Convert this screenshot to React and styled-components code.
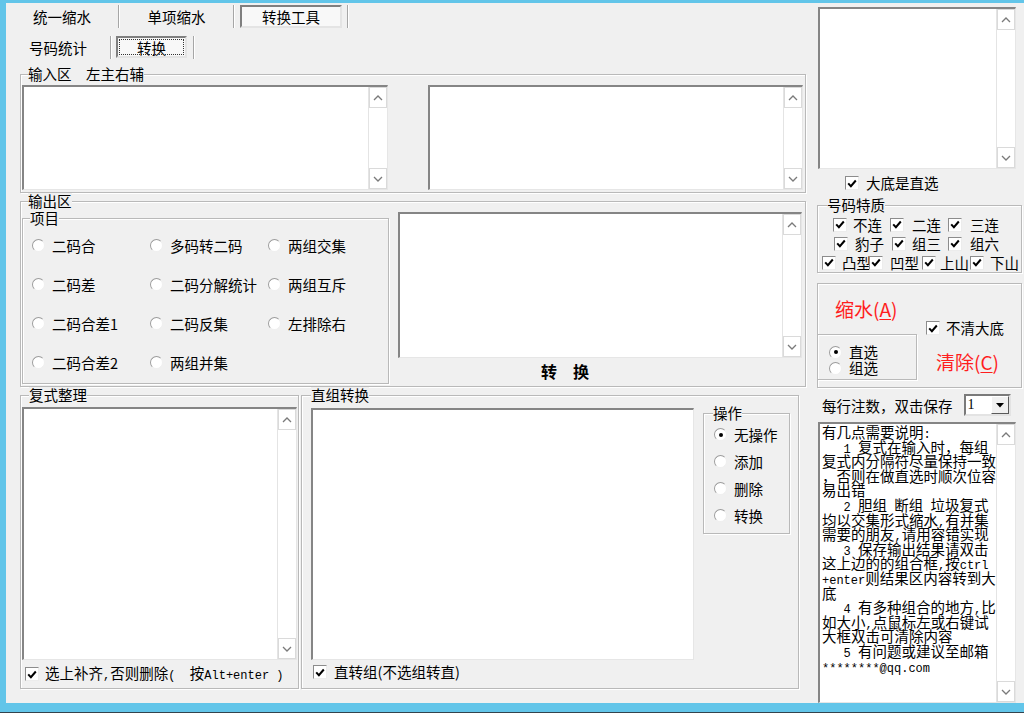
import React from "react";
import styled, { createGlobalStyle } from "styled-components";

const CJK = `"Noto Sans CJK SC", "Noto Sans", sans-serif`;
const MONO = `"Liberation Mono", "DejaVu Sans Mono", monospace`;

const GlobalStyle = createGlobalStyle`
  html, body { margin: 0; padding: 0; background: #ffffff; }
  body { font-family: ${CJK}; font-size: 14.5px; color: #000; }
`;

const Screen = styled.div`
  width: 1024px;
  height: 717px;
  overflow: hidden;
  background: #fff;
`;

const Window = styled.div`
  box-sizing: border-box;
  width: 1024px;
  height: 712px;
  border-top: 3px solid #62c5e9;
  border-left: 6px solid #62c5e9;
  border-bottom: 9px solid #62c5e9;
  box-shadow: 0 1px 0 #33434d;
  background: #f0f0f0;
  display: flex;
`;

const LeftPane = styled.div`
  width: 805px;
  flex-shrink: 0;
  display: flex;
  flex-direction: column;
`;

const RightPane = styled.div`
  box-sizing: border-box;
  width: 205px;
  height: 700px;
  margin-left: 6px;
  padding-top: 4px;
  display: flex;
  flex-direction: column;
`;

/* ---------- tabs ---------- */
const TabRow = styled.div`
  box-sizing: border-box;
  display: flex;
  align-items: flex-start;
  height: ${(p) => p.$h}px;
  padding-top: ${(p) => p.$pt}px;
`;

const Tab = styled.div`
  box-sizing: border-box;
  flex-shrink: 0;
  width: ${(p) => p.$w}px;
  height: 23px;
  padding: ${(p) => p.$pad || "0"};
  display: flex;
  align-items: center;
  justify-content: center;
  white-space: nowrap;
`;

const TabSep = styled.div`
  width: 0;
  height: 23px;
  border-left: 1px solid #a6a6a6;
  border-right: 1px solid #ffffff;
`;

const ActiveTab = styled.div`
  box-sizing: border-box;
  flex: 1;
  align-self: stretch;
  display: flex;
  align-items: center;
  justify-content: center;
  border: 2px solid;
  border-color: #7f7f7f #e4e4e4 #e4e4e4 #7f7f7f;
  background: #f8f8f8;
  padding: 1px;
`;

const FocusFrame = styled.div`
  box-sizing: border-box;
  width: 100%;
  height: 100%;
  display: flex;
  align-items: center;
  justify-content: center;
  outline: ${(p) => (p.$focus ? "1px dotted #333" : "none")};
  outline-offset: -1px;
`;

/* ---------- groups ---------- */
const Groups = styled.div`
  display: flex;
  flex-direction: column;
  padding-left: 14px;
  margin-top: 5px;
`;

const Group = styled.fieldset`
  box-sizing: border-box;
  flex-shrink: 0;
  margin: 0;
  padding: 0;
  min-width: 0;
  width: ${(p) => p.$w}px;
  height: ${(p) => p.$h}px;
  margin-top: ${(p) => p.$mt || 0}px;
  margin-left: ${(p) => p.$ml || 0}px;
  border: 1px solid #b9b9b9;
  box-shadow: inset 1px 1px 0 #ffffff, 1px 1px 0 #ffffff;
`;

const Legend = styled.legend`
  padding: 0;
  margin-left: ${(p) => p.$indent}px;
  font-size: 14.5px;
  line-height: 16px;
  background: #f0f0f0;
  white-space: pre;
`;

const InputRow = styled.div`
  display: flex;
  justify-content: space-between;
  padding: 3px 2px 0 1px;
`;

const OutputRow = styled.div`
  display: flex;
  align-items: flex-start;
  padding-left: 1px;
`;

const RadioGrid = styled.div`
  display: grid;
  grid-template-columns: 118px 118px 1fr;
  grid-auto-rows: 39px;
  align-items: center;
  padding-left: 9px;
`;

const OutRight = styled.div`
  display: flex;
  flex-direction: column;
  margin-left: 9px;
  margin-top: 3px;
`;

const ConvertLabel = styled.div`
  height: 26px;
  line-height: 26px;
  text-align: center;
  padding-right: 70px;
  font-size: 16px;
  font-weight: bold;
  white-space: pre;
`;

const BottomRow = styled.div`
  display: flex;
  gap: 2px;
`;

const GroupBody = styled.div`
  display: flex;
  flex-direction: ${(p) => p.$dir || "column"};
  align-items: flex-start;
  padding: ${(p) => p.$pad};
`;

const Column = styled.div`
  display: flex;
  flex-direction: column;
`;

const CheckRow = styled.div`
  box-sizing: border-box;
  display: flex;
  align-items: center;
  height: ${(p) => p.$h}px;
  padding-left: ${(p) => p.$pl}px;
`;

const OpList = styled.div`
  display: grid;
  grid-auto-rows: 27px;
  align-items: center;
  padding-left: 10px;
`;

/* ---------- text boxes ---------- */
const SunkenBox = styled.div`
  box-sizing: border-box;
  flex: ${(p) => (p.$grow ? "1 1 auto" : "0 0 auto")};
  width: ${(p) => p.$w}px;
  height: ${(p) => (p.$h ? `${p.$h}px` : "auto")};
  margin-left: ${(p) => p.$ml || 0}px;
  background: #ffffff;
  display: flex;
  border-style: solid;
  border-width: 2px 1px 1px 2px;
  border-color: #858585 #e6e6e6 #e6e6e6 #858585;
  overflow: hidden;
`;

const BoxText = styled.div`
  flex: 1;
  min-width: 0;
  padding-left: 2px;
`;

const ScrollCol = styled.div`
  box-sizing: border-box;
  width: 19px;
  flex-shrink: 0;
  display: flex;
  flex-direction: column;
  border-left: 1px solid #e4e4e4;
`;

const ScrollBtn = styled.div`
  box-sizing: border-box;
  height: 21px;
  border: 1px solid #dadada;
  display: flex;
  align-items: center;
  justify-content: center;
  background: #fff;
`;

const ScrollTrack = styled.div`
  flex: 1;
`;

const Chevron = ({ down }) => (
  <svg width="10" height="6" viewBox="0 0 10 6">
    <path
      d={down ? "M1 1 L5 5 L9 1" : "M1 5 L5 1 L9 5"}
      fill="none"
      stroke="#7a7a7a"
      strokeWidth="1.3"
    />
  </svg>
);

function TextBox({ w, h, ml, grow, scroll = true, children }) {
  return (
    <SunkenBox $w={w} $h={h} $ml={ml} $grow={grow}>
      <BoxText>{children}</BoxText>
      {scroll && (
        <ScrollCol>
          <ScrollBtn>
            <Chevron />
          </ScrollBtn>
          <ScrollTrack />
          <ScrollBtn>
            <Chevron down />
          </ScrollBtn>
        </ScrollCol>
      )}
    </SunkenBox>
  );
}

/* ---------- radios & checks ---------- */
const OptionItem = styled.div`
  display: flex;
  align-items: center;
  gap: ${(p) => (p.$gap ?? 7)}px;
  white-space: nowrap;
  line-height: 16px;
`;

const RadioDot = styled.span`
  box-sizing: border-box;
  width: 13px;
  height: 13px;
  flex-shrink: 0;
  border-radius: 50%;
  background: #fff;
  border: 1px solid;
  border-color: #9c9c9c #efefef #efefef #9c9c9c;
  display: flex;
  align-items: center;
  justify-content: center;
  &::after {
    content: "";
    width: 4px;
    height: 4px;
    border-radius: 50%;
    background: #000;
    display: ${(p) => (p.$on ? "block" : "none")};
  }
`;

const CheckSquare = styled.span`
  box-sizing: border-box;
  width: 14px;
  height: 14px;
  flex-shrink: 0;
  background: #fff;
  border: 1px solid;
  border-color: #8c8c8c #ececec #ececec #8c8c8c;
  display: flex;
  align-items: center;
  justify-content: center;
`;

const Tick = () => (
  <svg width="10" height="9" viewBox="0 0 10 9">
    <path d="M1.2 4.4 L3.9 7.2 L8.8 1.5" fill="none" stroke="#000" strokeWidth="2" />
  </svg>
);

const Radio = ({ on, children, gap }) => (
  <OptionItem $gap={gap}>
    <RadioDot $on={on} />
    <span>{children}</span>
  </OptionItem>
);

const Check = ({ children, gap }) => (
  <OptionItem $gap={gap ?? 6}>
    <CheckSquare>
      <Tick />
    </CheckSquare>
    <span>{children}</span>
  </OptionItem>
);

const M = styled.span`
  font-family: ${MONO};
  font-size: 12px;
  white-space: pre;
`;

/* ---------- right pane ---------- */
const FeatureRow = styled.div`
  display: grid;
  grid-template-columns: ${(p) => p.$cols};
  height: 19px;
  align-items: center;
  padding-left: ${(p) => p.$pl}px;
`;

const FeatureBody = styled.div`
  padding-top: 2px;
`;

const ShrinkBox = styled.div`
  box-sizing: border-box;
  height: 105px;
  margin-top: 10px;
  border: 1px solid #b9b9b9;
  box-shadow: inset 1px 1px 0 #fff, 1px 1px 0 #fff;
  display: grid;
  grid-template-columns: 99px 1fr;
`;

const RedAction = styled.div`
  color: #ff1e1e;
  font-size: 19px;
  height: ${(p) => p.$lh}px;
  line-height: ${(p) => p.$lh}px;
  padding-left: ${(p) => p.$pl}px;
  margin-top: ${(p) => p.$mt || 0}px;
  white-space: nowrap;
  u {
    text-decoration: underline;
    text-underline-offset: 2px;
  }
`;

const ModeBox = styled.div`
  box-sizing: border-box;
  width: 100px;
  height: 46px;
  margin-left: -1px;
  padding: 9px 0 0 11px;
  border: 1px solid #b9b9b9;
  box-shadow: inset 1px 1px 0 #fff, 1px 1px 0 #fff;
  display: grid;
  grid-auto-rows: 16px;
  align-items: center;
`;

const ShrinkRight = styled.div`
  display: flex;
  flex-direction: column;
`;

const CheckWrap = styled.div`
  margin-top: 36px;
  padding-left: 9px;
`;

const CountRow = styled.div`
  box-sizing: border-box;
  height: 34px;
  display: flex;
  align-items: center;
  padding-left: 5px;
  white-space: nowrap;
`;

const Combo = styled.div`
  box-sizing: border-box;
  width: 47px;
  height: 22px;
  margin-left: 11px;
  display: flex;
  background: #fff;
  border: 2px solid;
  border-color: #7a7a7a #e3e3e3 #e3e3e3 #7a7a7a;
`;

const ComboText = styled.div`
  flex: 1;
  font-family: "Liberation Serif", serif;
  font-size: 14px;
  line-height: 18px;
  padding-left: 2px;
`;

const ComboBtn = styled.div`
  box-sizing: border-box;
  width: 18px;
  background: #f0f0f0;
  border: 1px solid;
  border-color: #ffffff #5a5a5a #5a5a5a #ffffff;
  display: flex;
  align-items: center;
  justify-content: center;
`;

const Notes = styled.div`
  padding-top: 1px;
  font-size: 14.5px;
  white-space: pre;
`;

const NoteLine = styled.div`
  height: 14.6px;
  line-height: 14.6px;
`;

const noteLines = [
  <>有几点需要说明<M>:</M></>,
  <><M>   1 </M>复式在输入时，每组</>,
  <>复式内分隔符尽量保持一致</>,
  <>，否则在做直选时顺次位容</>,
  <>易出错</>,
  <><M>   2 </M>胆组<M> </M>断组<M> </M>垃圾复式</>,
  <>均以交集形式缩水<M>,</M>有并集</>,
  <>需要的朋友<M>,</M>请用容错实现</>,
  <><M>   3 </M>保存输出结果请双击</>,
  <>这上边的的组合框<M>,</M>按<M>ctrl</M></>,
  <><M>+enter</M>则结果区内容转到大</>,
  <>底</>,
  <><M>   4 </M>有多种组合的地方<M>,</M>比</>,
  <>如大小<M>,</M>点鼠标左或右键试</>,
  <>大框双击可清除内容</>,
  <><M>   5 </M>有问题或建议至邮箱</>,
  <><M>********@qq.com</M></>,
];

const outputOptions = [
  ["二码合", "多码转二码", "两组交集"],
  ["二码差", "二码分解统计", "两组互斥"],
  ["二码合差1", "二码反集", "左排除右"],
  ["二码合差2", "两组并集", null],
];

export default function App() {
  return (
    <Screen>
      <GlobalStyle />
      <Window>
        <LeftPane>
          <TabRow $h={30} $pt={2}>
            <Tab $w={112}>统一缩水</Tab>
            <TabSep />
            <Tab $w={113}>单项缩水</Tab>
            <TabSep />
            <Tab $w={112} $pad="0 5px">
              <ActiveTab>
                <FocusFrame>转换工具</FocusFrame>
              </ActiveTab>
            </Tab>
            <TabSep />
          </TabRow>
          <TabRow $h={28} $pt={3}>
            <Tab $w={104}>号码统计</Tab>
            <TabSep />
            <Tab $w={81} $pad="0 6px 1px 4px">
              <ActiveTab>
                <FocusFrame $focus>转换</FocusFrame>
              </ActiveTab>
            </Tab>
            <TabSep />
          </TabRow>

          <Groups>
            <Group $w={786} $h={127}>
              <Legend $indent={7}>输入区　左主右辅</Legend>
              <InputRow>
                <TextBox w={366} h={105} />
                <TextBox w={375} h={105} />
              </InputRow>
            </Group>

            <Group $w={786} $h={194}>
              <Legend $indent={7}>输出区</Legend>
              <OutputRow>
                <Group $w={367} $h={174} $mt={1}>
                  <Legend $indent={7}>项目</Legend>
                  <RadioGrid>
                    {outputOptions.flat().map((label, i) =>
                      label ? <Radio key={i}>{label}</Radio> : <span key={i} />
                    )}
                  </RadioGrid>
                </Group>
                <OutRight>
                  <TextBox w={404} h={146} />
                  <ConvertLabel>转　换</ConvertLabel>
                </OutRight>
              </OutputRow>
            </Group>

            <BottomRow>
              <Group $w={279} $h={302}>
                <Legend $indent={8}>复式整理</Legend>
                <GroupBody $pad="4px 0 0 1px">
                  <TextBox w={275} h={253} />
                  <CheckRow $h={28} $pl={3}>
                    <Check>
                      选上补齐<M>,</M>否则删除<M>(  </M>按<M>Alt+enter )</M>
                    </Check>
                  </CheckRow>
                </GroupBody>
              </Group>

              <Group $w={498} $h={302}>
                <Legend $indent={9}>直组转换</Legend>
                <GroupBody $dir="row" $pad="5px 0 0 9px">
                  <Column>
                    <TextBox w={383} h={252} scroll={false} />
                    <CheckRow $h={24} $pl={2}>
                      <Check gap={7}>直转组(不选组转直)</Check>
                    </CheckRow>
                  </Column>
                  <Group $w={87} $h={129} $ml={9} $mt={-3}>
                    <Legend $indent={9}>操作</Legend>
                    <OpList>
                      <Radio on>无操作</Radio>
                      <Radio>添加</Radio>
                      <Radio>删除</Radio>
                      <Radio>转换</Radio>
                    </OpList>
                  </Group>
                </GroupBody>
              </Group>
            </BottomRow>
          </Groups>
        </LeftPane>

        <RightPane>
          <TextBox w={198} h={162} ml={1} />
          <CheckRow $h={28} $pl={28}>
            <Check gap={7}>大底是直选</Check>
          </CheckRow>

          <Group $w={205} $h={76}>
            <Legend $indent={9}>号码特质</Legend>
            <FeatureBody>
              <FeatureRow $cols="57px 58px 1fr" $pl={15}>
                <Check>不连</Check>
                <Check gap={8}>二连</Check>
                <Check gap={8}>三连</Check>
              </FeatureRow>
              <FeatureRow $cols="58px 56px 1fr" $pl={16}>
                <Check gap={7}>豹子</Check>
                <Check gap={6}>组三</Check>
                <Check gap={8}>组六</Check>
              </FeatureRow>
              <FeatureRow $cols="47px 53px 48px 1fr" $pl={4}>
                <Check>凸型</Check>
                <Check gap={7}>凹型</Check>
                <Check gap={4}>上山</Check>
                <Check gap={6}>下山</Check>
              </FeatureRow>
            </FeatureBody>
          </Group>

          <ShrinkBox>
            <Column>
              <RedAction $lh={50} $pl={17}>
                缩水(<u>A</u>)
              </RedAction>
              <ModeBox>
                <Radio on gap={7}>直选</Radio>
                <Radio gap={7}>组选</Radio>
              </ModeBox>
            </Column>
            <ShrinkRight>
              <CheckWrap>
                <Check>不清大底</Check>
              </CheckWrap>
              <RedAction $lh={28} $pl={19} $mt={12}>
                清除(<u>C</u>)
              </RedAction>
            </ShrinkRight>
          </ShrinkBox>

          <CountRow>
            每行注数，双击保存
            <Combo>
              <ComboText>1</ComboText>
              <ComboBtn>
                <svg width="8" height="5" viewBox="0 0 8 5">
                  <path d="M0 0 L8 0 L4 4.5 Z" fill="#000" />
                </svg>
              </ComboBtn>
            </Combo>
          </CountRow>

          <TextBox w={198} ml={1} grow>
            <Notes>
              {noteLines.map((line, i) => (
                <NoteLine key={i}>{line}</NoteLine>
              ))}
            </Notes>
          </TextBox>
        </RightPane>
      </Window>
    </Screen>
  );
}
